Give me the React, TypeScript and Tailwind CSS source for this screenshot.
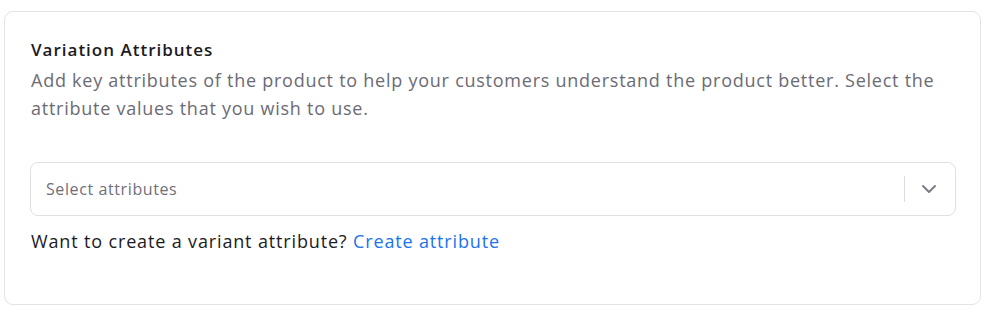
import React from 'react';

const App = () => {
    return (
        <div className="w-[983px] h-[309px] bg-white pl-[4px] pr-[2px] pt-[11px]" style={{ fontFamily: '"Open Sans", Lato, sans-serif' }}>
            <div className="h-[294px] rounded-[9px] border border-[#e3e3e3] pl-[25px] pr-[24px] pt-[25px]">
                <h2 className="pl-[1px] text-[17px] font-semibold leading-[26px] tracking-[1px] text-[#1b1b1f]">Variation Attributes</h2>
                <p className="mt-[3px] pl-[1px] text-[18px] leading-[28px] tracking-[0.75px] text-[#6b6b75] pr-[20px]">
                    Add key attributes of the product to help your customers understand the product better. Select the attribute values that you wish to use.
                </p>

                <div className="mt-[40px] flex h-[54px] items-center rounded-[8px] border border-[#e0e0e0] pl-[15px] pr-[16px]">
                    <span className="flex-1 text-[16px] tracking-[0.6px] text-[#6f6f78]">Select attributes</span>
                    <span className="h-[26px] w-px bg-[#dcdcdc]" />
                    <svg className="ml-[14px]" width="20" height="20" viewBox="0 0 20 20" fill="none">
                        <path d="M4 7l6 6 6-6" stroke="#7c7c86" strokeWidth="2" strokeLinecap="round" strokeLinejoin="round" />
                    </svg>
                </div>

                <div className="mt-[12px] pl-[1px] text-[18px] leading-[26px] tracking-[0.85px] text-[#1b1b1f]">
                    Want to create a variant attribute? <a className="text-[#1a73f0] cursor-pointer">Create attribute</a>
                </div>
            </div>
        </div>
    );
};

export default App;
